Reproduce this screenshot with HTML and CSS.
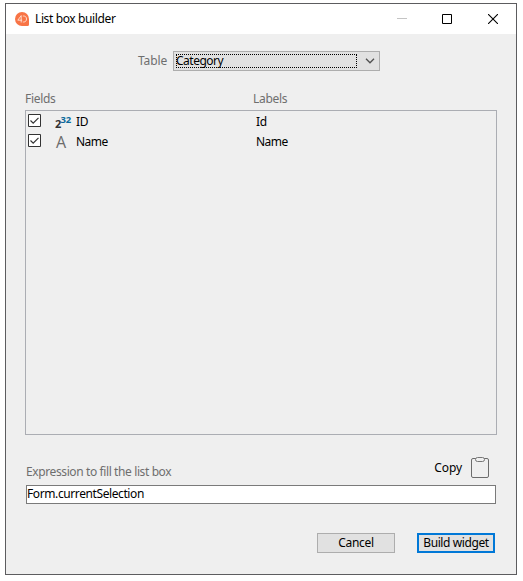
FILE: index.html
```html
<!DOCTYPE html>
<html lang="en">
<head>
<meta charset="utf-8">
<title>List box builder</title>
<link rel="stylesheet" href="styles.css">
</head>
<body>
<div class="window">
  <header class="titlebar">
    <svg class="logo" width="14" height="14" viewBox="0 0 14 14"><path d="M7 0a7 7 0 1 0 0 14h5.500q1.500 0 1.500-1.500V7a7 7 0 0 0-7-7z" fill="#f87446"/><path d="M6.200 10.500V3.600L2.800 8.200h4.400M7.800 4h.7c2 0 3 1.200 3 3s-1 3-3 3h-.7" fill="none" stroke="#ffe4d8" stroke-width=".9"/></svg>
    <h1 class="title">List box builder</h1>
    <div class="controls">
      <svg class="minimize" width="10" height="10" viewBox="0 0 10 10"><path d="M0 4.500h10" stroke="#c4c4c4"/></svg>
      <svg width="10" height="10" viewBox="0 0 10 10"><path d="M.5 .5h9v9h-9z" fill="none" stroke="#000"/></svg>
      <svg width="10" height="10" viewBox="0 0 10 10"><path d="M0 0l10 10M10 0L0 10" stroke="#000" stroke-width="1.1"/></svg>
    </div>
  </header>
  <main class="content">
    <div class="table-row">
      <span class="label table-label">Table</span>
      <div class="select">
        <span class="select-value">Category</span>
        <svg width="10" height="6" viewBox="0 0 10 6"><path d="M1 .8l4 4 4-4" fill="none" stroke="#505050" stroke-width="1.3"/></svg>
      </div>
    </div>
    <div class="heads"><span class="label fields-label">Fields</span><span class="label labels-label">Labels</span></div>
    <div class="list">
      <div class="row">
        <svg class="check" width="13" height="13" viewBox="0 0 13 13"><path d="M.5 .5h12v12H.5z" fill="#fff" stroke="#333"/><path d="M2.500 6.500l2.700 2.700 5.300-5.400" fill="none" stroke="#333" stroke-width="1.2"/></svg>
        <span class="type number">2<sup>32</sup></span>
        <span class="field">ID</span><span class="caption">Id</span>
      </div>
      <div class="row">
        <svg class="check" width="13" height="13" viewBox="0 0 13 13"><path d="M.5 .5h12v12H.5z" fill="#fff" stroke="#333"/><path d="M2.500 6.500l2.700 2.700 5.300-5.400" fill="none" stroke="#333" stroke-width="1.2"/></svg>
        <span class="type alpha">A</span>
        <span class="field name">Name</span><span class="caption name">Name</span>
      </div>
    </div>
    <div class="expression-head">
      <span class="label expression-label">Expression to fill the list box</span>
      <span class="copy">Copy</span>
      <svg class="clipboard" width="18" height="21" viewBox="0 0 18 21"><rect x=".5" y="1.500" width="17" height="19" rx="1.500" fill="none" stroke="#6c6c6c"/><rect x="4.500" y=".5" width="9" height="4" rx="2" fill="#efefef" stroke="#777"/></svg>
    </div>
    <div class="input"><span class="expression">Form.currentSelection</span></div>
    <div class="actions">
      <div class="button cancel">Cancel</div>
      <div class="button build">Build widget</div>
    </div>
  </main>
</div>
</body>
</html>
```
FILE: styles.css
```css
* { box-sizing: border-box; }
body {
  margin: 0;
  padding: 3px 0 0 5px;
  background: #fff;
  color: #000;
  font: 12px/16px "Noto Sans", "Open Sans", sans-serif;
  letter-spacing: -0.3px;
  white-space: nowrap;
}
svg { display: block; flex: none; }
.window {
  width: 512px;
  height: 572px;
  border: 1px solid #5c5c5f;
  background: #efefef;
}
.titlebar {
  display: flex;
  align-items: center;
  height: 30px;
  padding: 0 18px 0 9px;
  background: #fff;
}
.logo { margin-top: -1px; }
.title { margin: 0 auto 0 6px; font: inherit; letter-spacing: -0.38px; }
.controls { display: flex; gap: 36px; margin-top: -1px; }
.minimize { margin-right: -1px; }
.content { display: flex; flex-direction: column; padding: 17px 19px 0; }
.label { color: #6e6e6e; }
.table-row { display: flex; height: 20px; padding-left: 113px; }
.table-label { width: 35px; line-height: 20px; letter-spacing: -0.1px; }
.select {
  display: flex;
  align-items: center;
  width: 207px;
  height: 20px;
  padding: 0 4px 0 2px;
  border: 1px solid #adadad;
  background: #e1e1e1;
}
.select-value {
  width: 181px;
  height: 14px;
  margin-right: 8px;
  border: 1px dotted #000;
  line-height: 12px;
  text-indent: -1px;
  letter-spacing: -0.5px;
}
.heads { display: flex; height: 39px; padding-top: 20px; }
.fields-label { width: 228px; }
.labels-label { letter-spacing: -0.3px; }
.list { width: 472px; height: 325px; padding-top: 1px; border: 1px solid #abadb3; }
.row { display: flex; align-items: center; height: 20px; padding-left: 2px; }
.check { margin: -3px 13px 0 0; }
.type { width: 22px; font-family: "Open Sans", sans-serif; }
.number { padding: 3px 0 0 1px; color: #333; font-size: 11px; font-weight: 700; line-height: 12px; }
.number sup { margin-left: -0.5px; color: #0b6a9c; font-size: 9.5px; line-height: 0; vertical-align: 5px; }
.alpha { padding-left: 2px; color: #6c6c6c; font-size: 16px; }
.field { width: 180px; }
.name { letter-spacing: -0.5px; }
.expression-head { display: flex; align-items: center; height: 50px; padding: 15px 8px 0 1px; }
.expression-label { margin-right: auto; padding-top: 8px; letter-spacing: -0.39px; }
.copy { margin-right: 9px; letter-spacing: -0.1px; }
.input {
  width: 470px;
  height: 19px;
  margin-left: 1px;
  border: 1px solid #7a7a7a;
  background: #fff;
  line-height: 16px;
}
.expression { letter-spacing: -0.4px; }
.actions { display: flex; justify-content: flex-end; gap: 22px; padding: 29px 2px 0 0; }
.button {
  width: 78px;
  height: 20px;
  border: 1px solid #adadad;
  background: #e1e1e1;
  line-height: 18px;
  text-align: center;
}
.build { border: 2px solid #0078d7; line-height: 16px; letter-spacing: -0.4px; }
```
